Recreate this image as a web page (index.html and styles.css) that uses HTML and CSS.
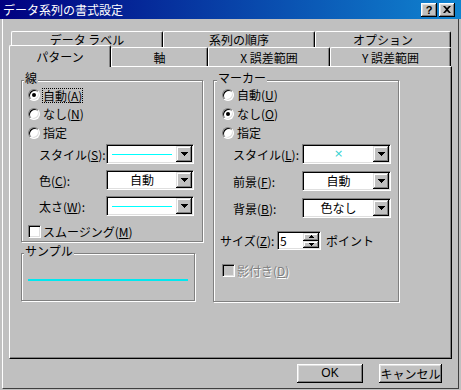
FILE: index.html
```html
<!DOCTYPE html>
<html lang="ja">
<head>
    <meta charset="UTF-8">
    <title>データ系列の書式設定</title>
    <link rel="stylesheet" href="styles.css">
</head>
<body>
    <div class="titlebar">
        <span class="title">データ系列の書式設定</span>
        <div class="tb-btns">
            <span class="tb-btn help">?</span>
            <span class="tb-btn">
                <svg width="8" height="7" viewBox="0 0 8 7"><path d="M0 0h2l2 2 2-2h2L5 3.5 8 7H6L4 5 2 7H0l3-3.5z" fill="#000"/></svg>
            </span>
        </div>
    </div>

    <div class="frame">
        <div class="tabs tabs-back">
            <div class="tab t-label">データ ラベル</div>
            <div class="tab t-order">系列の順序</div>
            <div class="tab t-option">オプション</div>
        </div>
        <div class="tabs tabs-front">
            <div class="tab active t-pattern">パターン</div>
            <div class="tab t-axis">軸</div>
            <div class="tab t-xerr">X 誤差範囲</div>
            <div class="tab t-yerr">Y 誤差範囲</div>
        </div>

        <div class="panel">
            <div class="col-left">
                <div class="group group-line">
                    <div class="legend">線</div>
                    <div class="opt"><span class="radio checked"></span><span class="focus">自動(<u>A</u>)</span></div>
                    <div class="opt"><span class="radio"></span><span class="opt-text">なし(<u>N</u>)</span></div>
                    <div class="opt"><span class="radio"></span><span class="opt-text">指定</span></div>

                    <div class="fields">
                        <div class="field">
                            <span class="field-label">スタイル(<u>S</u>):</span>
                            <div class="combo">
                                <div class="combo-value"><span class="cyan-line"></span></div>
                                <div class="combo-btn"><svg width="7" height="4" viewBox="0 0 7 4"><path d="M0 0h7v1h-1v1h-1v1h-1v1h-1v-1h-1v-1h-1v-1h-1z" fill="#000"/></svg></div>
                            </div>
                        </div>
                        <div class="field">
                            <span class="field-label">色(<u>C</u>):</span>
                            <div class="combo">
                                <div class="combo-value">自動</div>
                                <div class="combo-btn"><svg width="7" height="4" viewBox="0 0 7 4"><path d="M0 0h7v1h-1v1h-1v1h-1v1h-1v-1h-1v-1h-1v-1h-1z" fill="#000"/></svg></div>
                            </div>
                        </div>
                        <div class="field">
                            <span class="field-label">太さ(<u>W</u>):</span>
                            <div class="combo">
                                <div class="combo-value"><span class="cyan-line"></span></div>
                                <div class="combo-btn"><svg width="7" height="4" viewBox="0 0 7 4"><path d="M0 0h7v1h-1v1h-1v1h-1v1h-1v-1h-1v-1h-1v-1h-1z" fill="#000"/></svg></div>
                            </div>
                        </div>
                    </div>

                    <div class="check-row smooth"><span class="checkbox"></span><span class="check-text">スムージング(<u>M</u>)</span></div>
                </div>

                <div class="group group-sample">
                    <div class="legend">サンプル</div>
                    <div class="sample-line"></div>
                </div>
            </div>

            <div class="group group-marker">
                <div class="legend">マーカー</div>
                <div class="opt"><span class="radio"></span><span class="opt-text">自動(<u>U</u>)</span></div>
                <div class="opt"><span class="radio checked"></span><span class="opt-text">なし(<u>O</u>)</span></div>
                <div class="opt"><span class="radio"></span><span class="opt-text">指定</span></div>

                <div class="fields">
                    <div class="field">
                        <span class="field-label">スタイル(<u>L</u>):</span>
                        <div class="combo">
                            <div class="combo-value marker-x">×</div>
                            <div class="combo-btn"><svg width="7" height="4" viewBox="0 0 7 4"><path d="M0 0h7v1h-1v1h-1v1h-1v1h-1v-1h-1v-1h-1v-1h-1z" fill="#000"/></svg></div>
                        </div>
                    </div>
                    <div class="field">
                        <span class="field-label">前景(<u>F</u>):</span>
                        <div class="combo">
                            <div class="combo-value">自動</div>
                            <div class="combo-btn"><svg width="7" height="4" viewBox="0 0 7 4"><path d="M0 0h7v1h-1v1h-1v1h-1v1h-1v-1h-1v-1h-1v-1h-1z" fill="#000"/></svg></div>
                        </div>
                    </div>
                    <div class="field">
                        <span class="field-label">背景(<u>B</u>):</span>
                        <div class="combo">
                            <div class="combo-value">色なし</div>
                            <div class="combo-btn"><svg width="7" height="4" viewBox="0 0 7 4"><path d="M0 0h7v1h-1v1h-1v1h-1v1h-1v-1h-1v-1h-1v-1h-1z" fill="#000"/></svg></div>
                        </div>
                    </div>
                </div>

                <div class="size-row">
                    <span class="size-label">サイズ(<u>Z</u>):</span>
                    <div class="spin">
                        <span class="spin-value">5</span>
                        <div class="spin-btns">
                            <div class="spin-btn"><svg width="5" height="3" viewBox="0 0 5 3"><path d="M2 0h1v1h1v1h1v1H0V2h1V1h1z" fill="#000"/></svg></div>
                            <div class="spin-btn"><svg width="5" height="3" viewBox="0 0 5 3"><path d="M0 0h5v1H4v1H3v1H2V2H1V1H0z" fill="#000"/></svg></div>
                        </div>
                    </div>
                    <span class="size-unit">ポイント</span>
                </div>

                <div class="check-row shadow-row"><span class="checkbox disabled"></span><span class="check-text disabled-text">影付き(<u>D</u>)</span></div>
            </div>
        </div>

        <div class="buttons">
            <div class="button btn-ok">OK</div>
            <div class="button btn-cancel">キャンセル</div>
        </div>
    </div>
</body>
</html>
```

FILE: styles.css
```css
* {
    box-sizing: border-box;
}
body {
    margin: 0;
    width: 461px;
    height: 390px;
    overflow: hidden;
    background: #c0c0c0;
    color: #000;
    font-family: "Noto Sans CJK JP", "Noto Sans", sans-serif;
    font-size: 12px;
}
u {
    text-decoration: underline;
    text-underline-offset: 1px;
}

/* title bar */
.titlebar {
    height: 19px;
    display: flex;
    align-items: center;
    padding-left: 3px;
    background: linear-gradient(to right, #000080, #1084d0);
    color: #fff;
}
.title {
    flex: 1;
    line-height: 19px;
}
.tb-btns {
    display: flex;
    gap: 2px;
    margin-right: 6px;
}
.tb-btn {
    width: 16px;
    height: 14px;
    display: flex;
    align-items: center;
    justify-content: center;
    background: #c0c0c0;
    box-shadow: inset -1px -1px #000, inset 1px 1px #fff, inset -2px -2px #808080, inset 2px 2px #dfdfdf;
}
.help {
    color: #000;
    font-family: "Liberation Sans", sans-serif;
    font-weight: bold;
    font-size: 11px;
    line-height: 14px;
}

/* window body */
.frame {
    width: 457px;
    height: 370px;
    margin-left: 2px;
    padding: 12px 0 0 6px;
    border-left: 1px solid #fff;
    border-right: 1px solid #404040;
    border-bottom: 1px solid #404040;
}

/* tabs */
.tabs {
    display: flex;
}
.tabs-back {
    height: 16px;
    margin-left: 2px;
}
.tabs-front {
    height: 19px;
    align-items: flex-end;
}
.tab {
    height: 16px;
    border-top: 1px solid #fff;
    border-left: 1px solid #fff;
    border-right: 1px solid #000;
    border-radius: 2px 2px 0 0;
    box-shadow: inset -1px 0 #808080;
    background: #c0c0c0;
    text-align: center;
    line-height: 16px;
    white-space: nowrap;
}
.tabs-front .tab {
    height: 19px;
    line-height: 19px;
}
.tabs-front .tab.active {
    height: 22px;
    margin-bottom: -1px;
    padding-top: 1px;
    line-height: 20px;
    position: relative;
    z-index: 1;
}
.t-label { width: 152px; }
.t-order { width: 152px; }
.t-option { width: 136px; }
.t-pattern { width: 102px; }
.t-axis { width: 97px; }
.t-xerr { width: 122px; }
.t-yerr { width: 121px; }

/* panel */
.panel {
    width: 443px;
    height: 293px;
    display: flex;
    align-items: flex-start;
    gap: 10px;
    padding: 13px 0 0 11px;
    border-top: 1px solid #fff;
    border-left: 1px solid #fff;
    border-right: 1px solid #000;
    border-bottom: 1px solid #000;
    box-shadow: inset -1px -1px #808080;
}
.col-left {
    width: 182px;
    display: flex;
    flex-direction: column;
    gap: 11px;
}
.group {
    display: flex;
    flex-direction: column;
    border: 1px solid #808080;
    box-shadow: 1px 1px 0 #fff, inset 1px 1px 0 #fff;
}
.group-line {
    width: 182px;
    height: 162px;
}
.group-sample {
    width: 174px;
    height: 48px;
}
.group-marker {
    width: 186px;
    height: 222px;
}
.legend {
    width: fit-content;
    height: 14px;
    margin: -10px 0 0 2px;
    padding: 0 1px;
    background: #c0c0c0;
    line-height: 14px;
}
.group-marker .legend {
    margin-left: 3px;
}

/* radio options */
.opt {
    height: 18px;
    display: flex;
    align-items: center;
    margin-top: 1px;
    padding-left: 6px;
}
.group-marker .opt {
    padding-left: 8px;
}
.radio {
    width: 12px;
    height: 12px;
    display: flex;
    align-items: center;
    justify-content: center;
    border-radius: 50%;
    border: 1px solid;
    border-color: #808080 #fff #fff #808080;
    background: #fff;
    box-shadow: inset 1px 1px #000, inset -1px -1px #dfdfdf;
}
.radio.checked::after {
    content: "";
    width: 4px;
    height: 4px;
    border-radius: 50%;
    background: #000;
}
.opt-text {
    margin-left: 3px;
    line-height: 14px;
}
.focus {
    margin-left: 3px;
    line-height: 13px;
    outline: 1px dotted #000;
    outline-offset: 0;
}

/* combo fields */
.fields {
    display: flex;
    flex-direction: column;
    gap: 6px;
    margin-top: 2px;
}
.group-marker .fields {
    gap: 7px;
}
.field {
    height: 20px;
    display: flex;
    align-items: center;
    padding-left: 17px;
}
.group-marker .field {
    padding-left: 19px;
}
.field-label {
    width: 67px;
    white-space: nowrap;
}
.group-marker .field-label {
    width: 69px;
}
.combo {
    width: 88px;
    height: 20px;
    display: flex;
    padding: 1px;
    border: 1px solid;
    border-color: #808080 #fff #fff #808080;
    background: #fff;
    box-shadow: inset 1px 1px #000, inset -1px -1px #dfdfdf;
}
.group-marker .combo {
    width: 89px;
}
.combo-value {
    flex: 1;
    display: flex;
    align-items: center;
    justify-content: center;
    line-height: 16px;
}
.cyan-line {
    width: 60px;
    height: 1px;
    background: #00ffff;
}
.marker-x {
    color: #30d0d0;
    font-family: "DejaVu Sans", sans-serif;
    font-size: 11px;
}
.combo-btn {
    width: 16px;
    display: flex;
    align-items: center;
    justify-content: center;
    background: #c0c0c0;
    box-shadow: inset -1px -1px #000, inset 1px 1px #dfdfdf, inset -2px -2px #808080, inset 2px 2px #fff;
}

/* check boxes */
.check-row {
    display: flex;
    align-items: center;
    height: 13px;
}
.smooth {
    margin-top: 9px;
    padding-left: 6px;
}
.shadow-row {
    margin-top: 14px;
    padding-left: 8px;
}
.checkbox {
    width: 13px;
    height: 13px;
    border: 1px solid;
    border-color: #808080 #fff #fff #808080;
    background: #fff;
    box-shadow: inset 1px 1px #000, inset -1px -1px #dfdfdf;
}
.checkbox.disabled {
    background: #c0c0c0;
}
.check-text {
    margin-left: 2px;
    line-height: 14px;
}
.disabled-text {
    color: #808080;
    text-shadow: 1px 1px #fff;
}

/* size spinner */
.size-row {
    height: 19px;
    display: flex;
    align-items: center;
    margin-top: 13px;
    padding-left: 6px;
}
.size-label {
    width: 57px;
    white-space: nowrap;
}
.spin {
    width: 44px;
    height: 19px;
    display: flex;
    padding: 1px;
    border: 1px solid;
    border-color: #808080 #fff #fff #808080;
    background: #fff;
    box-shadow: inset 1px 1px #000, inset -1px -1px #dfdfdf;
}
.spin-value {
    flex: 1;
    padding-left: 1px;
    line-height: 15px;
}
.spin-btns {
    width: 16px;
    display: flex;
    flex-direction: column;
}
.spin-btn {
    flex: 1;
    display: flex;
    align-items: center;
    justify-content: center;
    background: #c0c0c0;
    box-shadow: inset -1px -1px #000, inset 1px 1px #dfdfdf, inset -2px -2px #808080, inset 2px 2px #fff;
}
.size-unit {
    margin-left: 5px;
}

/* sample */
.sample-line {
    flex: none;
    width: 160px;
    height: 2px;
    margin: 21px 0 0 6px;
    background: #00e8f0;
}

/* dialog buttons */
.buttons {
    width: 443px;
    display: flex;
    justify-content: flex-end;
    gap: 16px;
    margin-top: 5px;
    padding-right: 10px;
}
.button {
    height: 19px;
    text-align: center;
    line-height: 19px;
    background: #c0c0c0;
    box-shadow: inset -1px -1px #000, inset 1px 1px #fff, inset -2px -2px #808080, inset 2px 2px #dfdfdf;
}
.btn-ok {
    width: 66px;
    font-family: "Liberation Sans", sans-serif;
}
.btn-cancel {
    width: 63px;
}
```
